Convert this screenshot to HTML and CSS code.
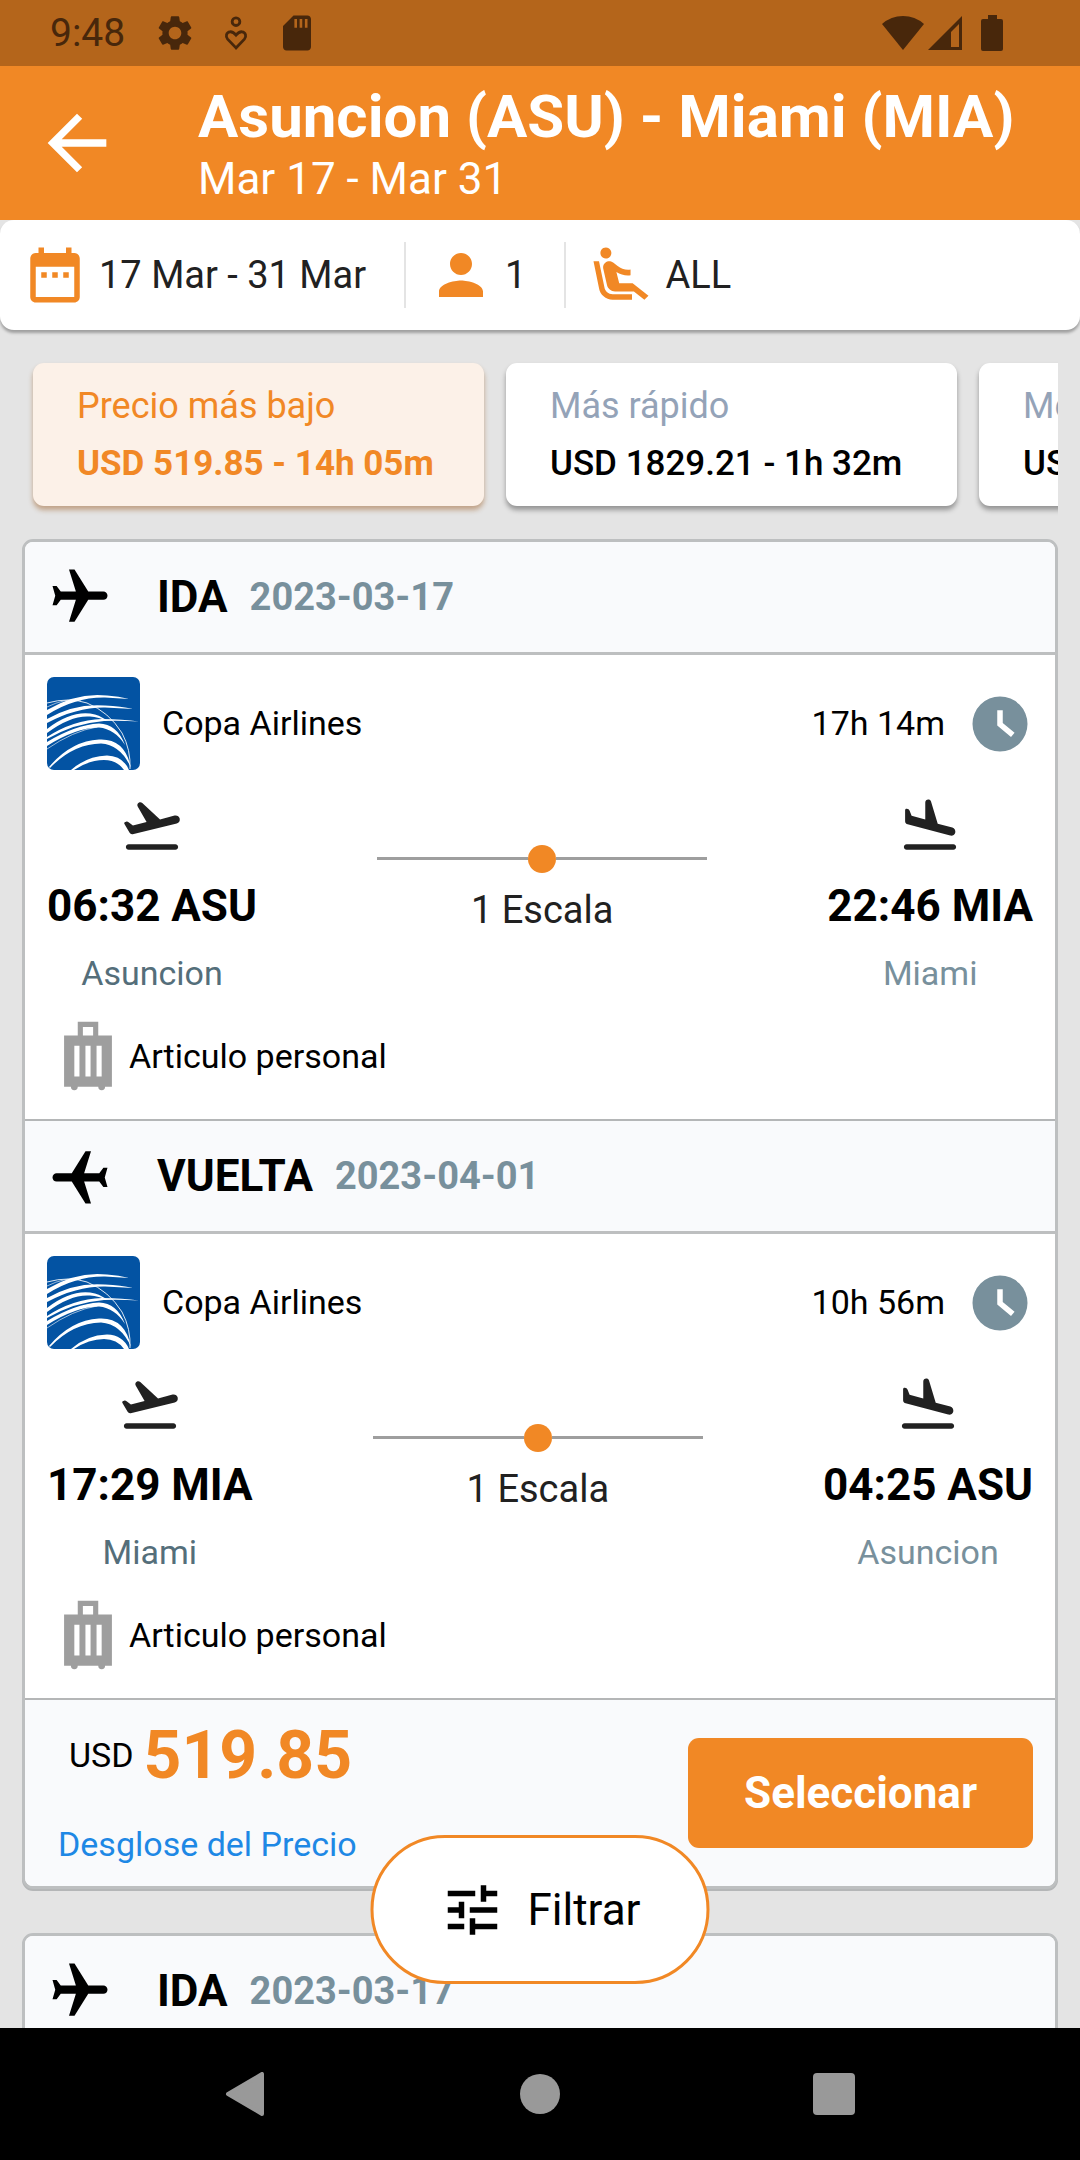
FILE: index.html
```html
<!DOCTYPE html>
<html lang="es">
<head>
    <meta charset="UTF-8">
    <meta name="viewport" content="width=device-width, initial-scale=1.0">
    <title>Asuncion (ASU) - Miami (MIA)</title>
    <link rel="stylesheet" href="styles.css">
</head>
<body>
    <!-- Shared icons -->
    <svg class="sprite" aria-hidden="true">
        <symbol id="plane" viewBox="0 0 24 24">
            <path d="M21 16v-2l-8-5V3.500c0-.83-.67-1.500-1.500-1.500S10 2.670 10 3.500V9l-8 5v2l8-2.500V19l-2 1.500V22l3.500-1 3.500 1v-1.500L13 19v-5.500l8 2.500z"/>
        </symbol>
        <symbol id="takeoff" viewBox="0 0 24 24">
            <path d="M20.500 19h-17c-.55 0-1 .45-1 1s.45 1 1 1h17c.55 0 1-.45 1-1s-.45-1-1-1zM22.070 9.640c-.22-.8-1.040-1.270-1.840-1.060L14.920 10 8.460 3.980c-.27-.25-.65-.34-1-.25-.68.18-1.010.95-.66 1.560l3.230 5.590-4.970 1.330-1.570-1.240c-.25-.19-.57-.26-.88-.18l-.33.090c-.32.080-.47.450-.3.730l1.880 3.250c.23.39.69.58 1.120.47L21 11.480c.8-.22 1.280-1.040 1.070-1.840z"/>
        </symbol>
        <symbol id="landing" viewBox="0 0 24 24">
            <path d="M20.500 19h-17c-.55 0-1 .45-1 1s.45 1 1 1h17c.55 0 1-.45 1-1s-.45-1-1-1zM3.510 11.610l15.830 4.240c.8.210 1.620-.26 1.840-1.060.21-.8-.26-1.620-1.060-1.840l-5.310-1.420-2.440-8.070c-.11-.35-.39-.63-.74-.72-.68-.18-1.350.33-1.350 1.040v6.230L5.310 8.680l-.72-1.870c-.12-.3-.37-.52-.68-.61l-.33-.09c-.32-.090-.63.150-.63.480v4.050c0 .46.310.850.560.970z"/>
        </symbol>
        <symbol id="clock" viewBox="0 0 24 24">
            <path fill-rule="evenodd" d="M12 2a10 10 0 1 0 0 20 10 10 0 0 0 0-20zM11 7h2v4.600l4.300 3.600-1.300 1.500-5-4.200z"/>
        </symbol>
        <symbol id="luggage" viewBox="0 0 24 24">
            <path fill-rule="evenodd" d="M9 2h6v4h4v15h-2a1 1 0 0 1-2 0H9a1 1 0 0 1-2 0H5V6h4zM10.500 3.500V6h3V3.500zM8 9v9h1.500V9zM11.250 9v9h1.500V9zM14.500 9v9H16V9z"/>
        </symbol>
        <symbol id="copa" viewBox="0 0 93 93">
            <rect width="93" height="93" fill="#0353a3"/>
            <g fill="#fff">
                <path d="M0 33Q30 15 60 18.500Q72 19 82 22Q70 21 58 20.500Q28 20 0 38z"/>
                <path d="M0 42Q28 26 58 28.500Q74 29 86 32Q72 31 58 30.500Q30 30 0 46z"/>
                <path d="M0 52Q26 32 48 37.500Q56 40 60 44Q52 40 43 39.500Q24 38 0 56z"/>
                <path d="M0 60Q26 43 55 42Q76 42 92 44.500Q74 43.500 57 44Q28 46 0 62z"/>
                <path d="M0 65Q28 48 52 46.500Q70 47 78 68Q68 52 52 50.500Q28 51 0 69z"/>
                <path d="M2 90Q24 64 52 62.500Q78 61 84 91Q74 68 54 66.500Q26 67 3 91z"/>
                <path d="M24 93Q40 79 60 78.500Q76 79 82 93H77Q70 83 57 83Q42 83 27 93z"/>
            </g>
            <g fill="none" stroke="#fff">
                <path opacity=".85" d="M0 26Q22 20 40 26Q62 35 75 56Q84 73 83 92"/>
                <path opacity=".6" d="M0 30Q18 21 34 23M0 72Q26 54 50 50"/>
            </g>
        </symbol>
    </svg>

    <div class="status-bar">
        <span class="status-time">9:48</span>
        <svg class="status-icon" viewBox="0 0 24 24"><path d="M19.140 12.940c.04-.3.060-.61.060-.94 0-.32-.02-.64-.07-.94l2.030-1.580c.18-.14.23-.41.12-.61l-1.920-3.320c-.12-.22-.37-.29-.59-.22l-2.390.96c-.5-.38-1.030-.7-1.620-.94l-.36-2.540c-.04-.24-.24-.41-.48-.41h-3.840c-.24 0-.43.170-.47.410l-.36 2.540c-.59.240-1.130.57-1.620.94l-2.390-.96c-.22-.08-.47 0-.59.220L2.740 8.870c-.12.21-.08.470.12.610l2.030 1.580c-.05.300-.09.630-.09.940s.02.640.07.940l-2.030 1.580c-.18.140-.23.410-.12.610l1.920 3.320c.12.220.37.290.59.220l2.390-.96c.5.380 1.030.7 1.620.94l.36 2.540c.05.240.24.410.48.410h3.840c.24 0 .44-.17.47-.41l.36-2.540c.59-.24 1.130-.56 1.620-.94l2.390.96c.22.080.47 0 .59-.22l1.920-3.320c.12-.22.070-.47-.12-.61l-2.010-1.580zM12 15.600c-1.980 0-3.600-1.620-3.600-3.600s1.620-3.600 3.600-3.600 3.600 1.620 3.600 3.600-1.620 3.600-3.600 3.600z"/></svg>
        <svg class="status-icon" viewBox="0 0 24 24"><g fill="none" stroke="currentColor" stroke-width="1.600"><circle cx="12" cy="5.500" r="2.200"/><path d="M12 20.500l-4.800-5c-1.300-1.500-.8-4 1.400-4.200 1.500-.1 2.500.8 3.400 1.900.9-1.100 1.900-2 3.400-1.900 2.200.2 2.700 2.700 1.400 4.200z"/></g></svg>
        <svg class="status-icon" viewBox="0 0 24 24"><path d="M18 2h-8L4 8v12c0 1.100.9 2 2 2h12c1.100 0 2-.9 2-2V4c0-1.100-.9-2-2-2zm-6 7h-1.500V4H12v5zm3 0h-1.500V4H15v5zm3 0h-1.500V4H18v5z"/></svg>
        <span class="status-right">
            <svg class="status-wifi" viewBox="0 0 42 36"><path d="M21 35L0 9Q9 1 21 1T42 9z"/></svg>
            <svg class="status-signal" viewBox="0 0 36 36"><path fill-rule="evenodd" d="M35 1v34H1zM32 9l-8 8v15h8z"/></svg>
            <svg class="status-battery" viewBox="0 0 22 36"><path d="M7 0h9v4h4q2 0 2 2v28q0 2-2 2H2q-2 0-2-2V6q0-2 2-2h5z"/></svg>
        </span>
    </div>

    <header class="app-bar">
        <button class="back-button" type="button" aria-label="Volver">
            <svg viewBox="0 0 24 24"><path d="M20 11H7.830l5.590-5.590L12 4l-8 8 8 8 1.410-1.410L7.830 13H20v-2z"/></svg>
        </button>
        <div class="app-title">
            <h1>Asuncion (ASU) - Miami (MIA)</h1>
            <p>Mar 17 - Mar 31</p>
        </div>
    </header>

    <div class="search-bar">
        <button class="search-item" type="button">
            <svg class="icon" viewBox="0 0 24 24"><path d="M9 11H7v2h2v-2zm4 0h-2v2h2v-2zm4 0h-2v2h2v-2zm2-7h-1V2h-2v2H8V2H6v2H5c-1.110 0-1.990.9-1.990 2L3 20c0 1.100.89 2 2 2h14c1.100 0 2-.9 2-2V6c0-1.100-.9-2-2-2zm0 16H5V9h14v11z"/></svg>
            17 Mar - 31 Mar
        </button>
        <button class="search-item" type="button">
            <svg class="icon" viewBox="0 0 24 24"><path d="M12 12c2.210 0 4-1.790 4-4s-1.790-4-4-4-4 1.790-4 4 1.790 4 4 4zm0 2c-2.670 0-8 1.340-8 4v2h16v-2c0-2.660-5.330-4-8-4z"/></svg>
            1
        </button>
        <button class="search-item" type="button">
            <svg class="icon" viewBox="0 0 24 24"><path d="M5.350 5.640c-.9-.64-1.120-1.880-.49-2.790.63-.9 1.880-1.120 2.790-.49.9.640 1.120 1.880.49 2.790-.64.9-1.880 1.120-2.790.49zM16 19H8.930c-1.480 0-2.740-1.080-2.960-2.540L4 7H2l1.990 9.760C4.370 19.200 6.470 21 8.940 21H16v-2zm.23-4h-4.880l-1.030-4.100c1.580.89 3.280 1.540 5.150 1.220V9.990c-1.630.31-3.440-.27-4.690-1.250L9.140 7.470c-.23-.18-.49-.3-.76-.38-.32-.09-.66-.12-.99-.06h-.02c-1.230.22-2.050 1.390-1.840 2.610l1.350 5.920C7.160 16.980 8.390 18 9.830 18h6.850l3.820 3 1.500-1.500-5.770-4.500z"/></svg>
            ALL
        </button>
    </div>

    <main class="results">
        <div class="sort-list">
            <button class="sort-card active" type="button">
                <span>Precio más bajo</span>
                <strong>USD 519.85 - 14h 05m</strong>
            </button>
            <button class="sort-card" type="button">
                <span>Más rápido</span>
                <strong>USD 1829.21 - 1h 32m</strong>
            </button>
            <button class="sort-card" type="button">
                <span>Mejor</span>
                <strong>USD 519.85 - 14h 05m</strong>
            </button>
        </div>

        <article class="flight-card">
            <div class="leg-header">
                <svg class="icon plane-out"><use href="#plane"/></svg>
                <h2>IDA</h2>
                <time>2023-03-17</time>
            </div>
            <div class="leg">
                <div class="airline">
                    <svg class="airline-logo"><use href="#copa"/></svg>
                    <span>Copa Airlines</span>
                    <span class="duration">17h 14m</span>
                    <svg class="icon clock"><use href="#clock"/></svg>
                </div>
                <div class="route">
                    <div class="stop origin">
                        <svg class="icon"><use href="#takeoff"/></svg>
                        <strong>06:32 ASU</strong>
                        <span>Asuncion</span>
                    </div>
                    <div class="layover">
                        <div class="layover-line"><i></i></div>
                        <span>1 Escala</span>
                    </div>
                    <div class="stop">
                        <svg class="icon"><use href="#landing"/></svg>
                        <strong>22:46 MIA</strong>
                        <span>Miami</span>
                    </div>
                </div>
                <div class="baggage">
                    <svg><use href="#luggage"/></svg>
                    <span>Articulo personal</span>
                </div>
            </div>

            <div class="leg-header">
                <svg class="icon plane-back"><use href="#plane"/></svg>
                <h2>VUELTA</h2>
                <time>2023-04-01</time>
            </div>
            <div class="leg">
                <div class="airline">
                    <svg class="airline-logo"><use href="#copa"/></svg>
                    <span>Copa Airlines</span>
                    <span class="duration">10h 56m</span>
                    <svg class="icon clock"><use href="#clock"/></svg>
                </div>
                <div class="route">
                    <div class="stop origin">
                        <svg class="icon"><use href="#takeoff"/></svg>
                        <strong>17:29 MIA</strong>
                        <span>Miami</span>
                    </div>
                    <div class="layover">
                        <div class="layover-line"><i></i></div>
                        <span>1 Escala</span>
                    </div>
                    <div class="stop">
                        <svg class="icon"><use href="#landing"/></svg>
                        <strong>04:25 ASU</strong>
                        <span>Asuncion</span>
                    </div>
                </div>
                <div class="baggage">
                    <svg><use href="#luggage"/></svg>
                    <span>Articulo personal</span>
                </div>
            </div>

            <div class="card-footer">
                <div class="price-box">
                    <p class="price">USD <strong>519.85</strong></p>
                    <a href="#">Desglose del Precio</a>
                </div>
                <button class="select-button" type="button">Seleccionar</button>
            </div>
        </article>

        <article class="flight-card">
            <div class="leg-header">
                <svg class="icon plane-out"><use href="#plane"/></svg>
                <h2>IDA</h2>
                <time>2023-03-17</time>
            </div>
        </article>

        <button class="filter-button" type="button">
            <svg class="icon" viewBox="0 0 24 24"><path d="M3 17v2h6v-2H3zM3 5v2h10V5H3zm10 16v-2h8v-2h-8v-2h-2v6h2zM7 9v2H3v2h4v2h2V9H7zm14 4v-2H11v2h10zm-6-4h2V7h4V5h-4V3h-2v6z"/></svg>
            Filtrar
        </button>
    </main>

    <nav class="nav-bar">
        <button type="button" aria-label="Atrás"><svg viewBox="0 0 44 44"><path d="M38 2v40L4 22z" stroke="currentColor" stroke-width="4" stroke-linejoin="round"/></svg></button>
        <button type="button" aria-label="Inicio"><svg viewBox="0 0 44 44"><circle cx="22" cy="22" r="20"/></svg></button>
        <button type="button" aria-label="Recientes"><svg viewBox="0 0 44 44"><rect x="1" y="1" width="42" height="42" rx="4"/></svg></button>
    </nav>
</body>
</html>
```

FILE: styles.css
```css
* {
    margin: 0;
    padding: 0;
    box-sizing: border-box;
    font-family: Roboto, sans-serif;
}

body {
    background-color: #e4e4e4;
    height: 100vh;
    display: flex;
    flex-direction: column;
    overflow: hidden;
    font-size: 34px;
    line-height: 39px;
    color: #000;
}

button {
    border: none;
    background: none;
    color: inherit;
    cursor: pointer;
}

svg {
    display: block;
    flex-shrink: 0;
    fill: currentColor;
}

.sprite {
    position: absolute;
    width: 0;
    height: 0;
}

.icon {
    width: 66px;
    height: 66px;
}

/* Status bar */
.status-bar {
    display: flex;
    align-items: center;
    height: 66px;
    padding: 0 77px 0 50px;
    background-color: #b4651b;
    color: #48270b;
}

.status-time {
    font-size: 39px;
    line-height: 46px;
    margin-right: 10px;
}

.status-icon {
    width: 42px;
    height: 42px;
    margin-left: 19px;
}

.status-right {
    display: flex;
    margin-left: auto;
}

.status-wifi {
    width: 42px;
    height: 36px;
}

.status-signal {
    width: 36px;
    height: 36px;
    margin: 0 18px 0 3px;
}

.status-battery {
    width: 22px;
    height: 36px;
}

/* App bar */
.app-bar {
    display: flex;
    align-items: center;
    height: 154px;
    padding: 0 33px;
    gap: 77px;
    background-color: #f18825;
    color: #fff;
}

.back-button svg {
    width: 88px;
    height: 88px;
}

.app-title h1 {
    font-size: 60px;
    line-height: 72px;
    font-weight: 700;
    white-space: nowrap;
}

.app-title p {
    font-size: 44px;
    line-height: 52px;
}

/* Search summary */
.search-bar {
    display: flex;
    align-items: center;
    height: 110px;
    background-color: #fff;
    border-radius: 14px;
    box-shadow: 0 3px 3px rgba(0, 0, 0, 0.3);
    color: #212121;
}

.search-item {
    display: flex;
    align-items: center;
    gap: 11px;
    height: 66px;
    padding: 0 38px 0 22px;
    font-size: 38px;
    line-height: 46px;
    border-right: 2px solid #e4e4e4;
}

.search-item:last-child {
    border-right: none;
}

.search-item .icon {
    color: #f18825;
}

/* Results */
.results {
    position: relative;
    flex: 1;
    min-height: 0;
    overflow: hidden;
    padding: 22px 22px 0;
}

.sort-list {
    display: flex;
    gap: 22px;
    padding: 11px 11px 33px;
    overflow: hidden;
}

.sort-card {
    flex-shrink: 0;
    min-width: 451px;
    height: 143px;
    padding: 0 44px;
    border-radius: 11px;
    background-color: #fff;
    box-shadow: 0 4px 5px rgba(0, 0, 0, 0.35);
    text-align: left;
    font-size: 36px;
    line-height: 58px;
}

.sort-card span,
.sort-card strong {
    display: block;
}

.sort-card span {
    color: #94a3b8;
}

.sort-card strong {
    font-size: 35px;
    font-weight: 500;
}

.sort-card.active {
    background-color: #fcf1e8;
    box-shadow: 0 4px 5px rgba(150, 85, 25, 0.45);
}

.sort-card.active span,
.sort-card.active strong {
    color: #f18825;
}

.sort-card.active strong {
    font-weight: 700;
}

.flight-card {
    margin-bottom: 44px;
    border: 3px solid #bdbfc0;
    border-radius: 11px;
    background-color: #fff;
    box-shadow: 0 2px 0 #b4b6b7;
    overflow: hidden;
}

.leg-header {
    display: flex;
    align-items: center;
    height: 113px;
    padding: 0 22px;
    background-color: #f9fafc;
    border-bottom: 3px solid #bdbfc0;
}

.leg-header h2 {
    margin: 0 22px 0 44px;
    font-size: 44px;
    line-height: 52px;
    font-weight: 700;
}

.leg-header time {
    font-size: 38px;
    line-height: 46px;
    font-weight: 700;
    color: #78909c;
}

.plane-out {
    transform: rotate(90deg);
}

.plane-back {
    transform: rotate(-90deg);
}

.leg {
    display: flex;
    flex-direction: column;
    gap: 22px;
    padding: 22px;
    border-bottom: 2px solid #b4b6b7;
}

.airline {
    display: flex;
    align-items: center;
}

.airline-logo {
    width: 93px;
    height: 93px;
    margin-right: 22px;
    border-radius: 7px;
}

.duration {
    margin: 0 22px 0 auto;
}

.clock {
    color: #78909c;
}

.route {
    display: flex;
    align-items: center;
    justify-content: space-between;
}

.stop {
    display: flex;
    flex-direction: column;
    align-items: center;
    gap: 22px;
    color: #78909c;
}

.stop .icon {
    color: #212121;
}

.stop strong {
    font-size: 44px;
    line-height: 52px;
    color: #000;
}

.origin {
    color: #546e7a;
}

.layover {
    width: 330px;
    padding-bottom: 8px;
    text-align: center;
    font-size: 38px;
    line-height: 46px;
    color: #212121;
}

.layover-line {
    display: flex;
    align-items: center;
    height: 28px;
    margin-bottom: 14px;
}

.layover-line::before,
.layover-line::after {
    content: "";
    flex: 1;
    height: 3px;
    background-color: #9e9e9e;
}

.layover-line i {
    width: 28px;
    height: 28px;
    border-radius: 50%;
    background-color: #f18825;
}

.baggage {
    display: flex;
    align-items: center;
}

.baggage svg {
    width: 82px;
    height: 82px;
    color: #9e9e9e;
}

.card-footer {
    display: flex;
    align-items: center;
    justify-content: space-between;
    height: 186px;
    padding: 0 22px;
    background-color: #f9fafc;
}

.price-box {
    padding: 0 0 6px 11px;
}

.price {
    display: flex;
    align-items: center;
    gap: 10px;
    margin-bottom: 31px;
    padding-left: 11px;
}

.price strong {
    font-size: 66px;
    line-height: 77px;
    color: #f18825;
}

.price-box a {
    color: #1e88e5;
    text-decoration: none;
}

.select-button {
    height: 110px;
    padding: 0 56px;
    border-radius: 11px;
    background-color: #f18825;
    color: #fff;
    font-size: 44px;
    font-weight: 700;
}

.filter-button {
    position: absolute;
    bottom: 44px;
    left: 50%;
    transform: translateX(-50%);
    display: flex;
    align-items: center;
    gap: 22px;
    height: 149px;
    padding: 0 66px;
    border: 3px solid #f18825;
    border-radius: 75px;
    background-color: #fff;
    font-size: 44px;
}

/* Navigation bar */
.nav-bar {
    display: flex;
    justify-content: center;
    align-items: center;
    gap: 250px;
    height: 132px;
    background-color: #000;
    color: #999;
}

.nav-bar svg {
    width: 44px;
    height: 44px;
}
```
